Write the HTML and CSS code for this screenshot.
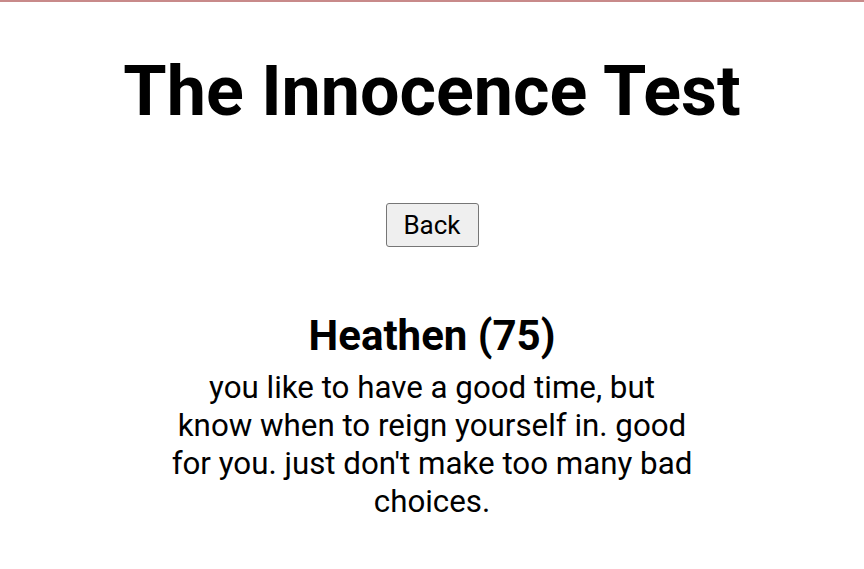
FILE: index.html
```html
<!DOCTYPE html>
<html>
<head>
<meta charset="utf-8">
<link rel="stylesheet" href="styles.css">
</head>
<body>
<div class="page">
  <h1 class="title">The Innocence Test</h1>
  <button class="back">Back</button>
  <div class="result">
    <h2 class="result-name">Heathen (75)</h2>
    <p class="result-text">you like to have a good time, but know when to reign yourself in. good for you. just don't make too many bad choices.</p>
  </div>
</div>
</body>
</html>
```
FILE: styles.css
```css
html, body {
  margin: 0;
  padding: 0;
  background: #fff;
}
body {
  border-top: 2px solid #c88a8a;
  font-family: Roboto, "Liberation Sans", sans-serif;
  color: #000;
}
.page {
  display: flex;
  flex-direction: column;
  align-items: center;
  text-align: center;
}
.title {
  font-size: 70px;
  font-weight: 700;
  margin: 48px 0 0;
  line-height: 82px;
}
.back {
  margin-top: 71px;
  font-family: Roboto, "Liberation Sans", sans-serif;
  font-size: 26px;
  padding: 4px 14px;
  width: 93px;
  height: 44px;
  background: #efefef;
  border: 1px solid #767676;
  border-radius: 3px;
  color: #000;
}
.result {
  margin-top: 66px;
  width: 524px;
}
.result-name {
  font-size: 42px;
  font-weight: 700;
  margin: 0;
  line-height: 46px;
}
.result-text {
  font-size: 31.3px;
  line-height: 38px;
  margin: 10px 0 0;
}
```
